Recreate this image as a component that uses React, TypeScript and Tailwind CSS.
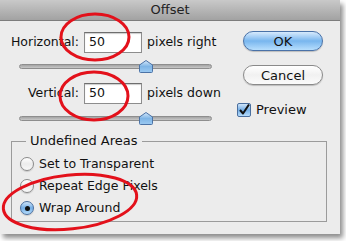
import React from "react";

const font = { fontFamily: '"DejaVu Sans", "Liberation Sans", sans-serif' };

// little slider with the aqua pentagon thumb
const Slider = ({ className }: { className: string }) => (
  <div className={`relative ml-[19px] w-[193px] h-[12px] flex items-center ${className}`}>
    <div className="w-full h-[5px] rounded-full border border-[#8e8e8e] bg-gradient-to-b from-[#a4a4a4] to-[#c8c8c8]" />
    <svg className="absolute left-[120px] top-0" width="14" height="13" viewBox="0 0 14 13">
      <defs>
        <linearGradient id="thumb" x1="0" y1="0" x2="0" y2="1">
          <stop offset="0" stopColor="#d6e9fb" />
          <stop offset="0.5" stopColor="#7fb5e6" />
          <stop offset="1" stopColor="#9ccaf2" />
        </linearGradient>
      </defs>
      <path d="M7 0.5 L13.5 5 L13.5 11.5 Q13.5 12.5 12.5 12.5 L1.5 12.5 Q0.5 12.5 0.5 11.5 L0.5 5 Z" fill="url(#thumb)" stroke="#4c73a6" strokeWidth="1" />
    </svg>
  </div>
);

const NumberField = ({ label, value, unit, labelWidth }: { label: string; value: string; unit: string; labelWidth: string }) => (
  <div className="flex items-center h-[21px]">
    <span className={`${labelWidth} text-right`}>{label}</span>
    <div className="ml-[5px] w-[58px] h-[21px] border border-[#8d8d8d] border-t-[#6e6e6e] bg-white shadow-[inset_0_1px_1px_rgba(0,0,0,0.2)] flex items-center pl-[4px]">
      {value}
    </div>
    <span className="ml-[5px]">{unit}</span>
  </div>
);

const Radio = ({ label, checked }: { label: string; checked?: boolean }) => (
  <div className="flex items-center h-[22px]">
    <div
      className={`w-[14px] h-[14px] rounded-full border flex items-center justify-center shadow-[0_1px_1px_rgba(0,0,0,0.15)] ${
        checked
          ? "border-[#4a6f9f] bg-gradient-to-b from-[#cfe4f8] via-[#73aee6] to-[#b6dcfb]"
          : "border-[#8a8a8a] bg-gradient-to-b from-[#ffffff] via-[#ececec] to-[#f9f9f9]"
      }`}
    >
      {checked && <div className="w-[5px] h-[5px] rounded-full bg-[#111]" />}
    </div>
    <span className="ml-[5px]">{label}</span>
  </div>
);

export default function App() {
  return (
    <div className="relative w-[346px] h-[241px] bg-white overflow-hidden text-[12.5px] text-[#111]" style={font}>
      <div className="w-[340px] h-[234px] bg-[#ececec] shadow-[3px_4px_5px_rgba(0,0,0,0.45)] flex flex-col">
        {/* title bar */}
        <div className="h-[21px] shrink-0 flex items-center justify-center border-b border-[#7d7d7d] bg-gradient-to-b from-[#c9c9c9] to-[#a2a2a2] text-[13px] text-[#222]">
          Offset
        </div>

        <div className="flex pt-[10px]">
          {/* left column */}
          <div className="w-[237px] pt-[1px]">
            <NumberField label="Horizontal:" value="50" unit="pixels right" labelWidth="w-[79px]" />
            <Slider className="mt-[7px]" />
            <div className="mt-[11px]">
              <NumberField label="Vertical:" value="50" unit="pixels down" labelWidth="w-[79px]" />
            </div>
            <Slider className="mt-[8px]" />
          </div>

          {/* right column */}
          <div className="flex flex-col">
            <button className="ml-[6px] w-[80px] h-[20px] rounded-full border border-[#4a72a8] bg-gradient-to-b from-[#d7eafc] via-[#78b6ee] to-[#b7defd] text-[13px] leading-none shadow-[0_1px_1px_rgba(0,0,0,0.2)]">
              OK
            </button>
            <button className="ml-[6px] mt-[14px] w-[80px] h-[20px] rounded-full border border-[#8a8a8a] bg-gradient-to-b from-[#ffffff] via-[#f1f1f1] to-[#fbfbfb] text-[13px] leading-none shadow-[0_1px_1px_rgba(0,0,0,0.2)]">
              Cancel
            </button>
            <div className="mt-[18px] flex items-center h-[14px]">
              <div className="w-[14px] h-[14px] rounded-[2px] border border-[#4a6f9f] bg-gradient-to-b from-[#cfe4f8] via-[#73aee6] to-[#b6dcfb] flex items-center justify-center">
                <svg width="12" height="12" viewBox="0 0 12 12">
                  <path d="M2 6 L5 9.5 L11 0.5" fill="none" stroke="#111" strokeWidth="2" strokeLinejoin="round" />
                </svg>
              </div>
              <span className="ml-[5px] text-[13px]">Preview</span>
            </div>
          </div>
        </div>

        <fieldset className="ml-[11px] mt-[9px] w-[316px] h-[89px] border border-[#9b9b9b] pl-[8px] pt-[4px]">
          <legend className="ml-[6px] px-[4px] text-[13px] leading-[16px]">Undefined Areas</legend>
          <Radio label="Set to Transparent" />
          <Radio label="Repeat Edge Pixels" />
          <Radio label="Wrap Around" checked />
        </fieldset>
      </div>

      {/* red annotation circles */}
      <svg className="absolute left-0 top-0 pointer-events-none" width="346" height="241" viewBox="0 0 346 241">
        <ellipse cx="95" cy="37" rx="34" ry="23" fill="none" stroke="#e3111b" strokeWidth="3" />
        <ellipse cx="94" cy="96" rx="34" ry="24" fill="none" stroke="#e3111b" strokeWidth="3" />
        <ellipse cx="70" cy="202" rx="67" ry="27" fill="none" stroke="#e3111b" strokeWidth="3" transform="rotate(-6 70 202)" />
      </svg>
    </div>
  );
}
